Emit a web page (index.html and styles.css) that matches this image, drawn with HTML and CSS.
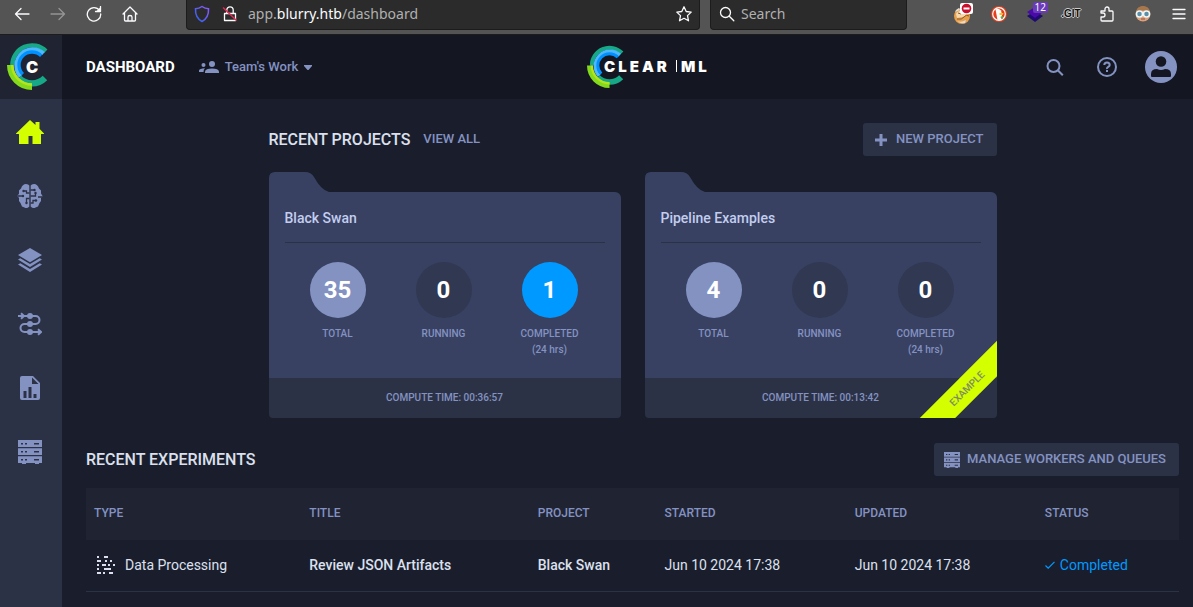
FILE: index.html
```html
<!DOCTYPE html>
<html lang="en">
<head>
<meta charset="utf-8">
<title>ClearML - Dashboard</title>
<link rel="stylesheet" href="styles.css">
</head>
<body>
<svg class="defs" aria-hidden="true">
  <symbol id="rings" viewBox="-75 -75 150 150">
    <g fill="none">
      <path stroke="#16a887" stroke-width="13" d="M41.7-41.7A59 59 0 0 0-59 0"/>
      <path stroke="#16a887" stroke-width="19" d="M-38.9 38.9A55 55 0 0 0 38.9 38.9"/>
      <path stroke="#4db8ff" stroke-width="12" d="M34.6-34.6A49 49 0 0 0-34.6 34.6"/>
      <path stroke="#0091ff" stroke-width="10" d="M27.6-27.6A39 39 0 0 0-27.6 27.6"/>
      <path stroke="#84da1c" stroke-width="19" d="M-65.5 0A65.5 65.5 0 0 0 0 65.5"/>
      <path stroke="#b4e51c" stroke-width="8" d="M-59 0A59 59 0 0 0 0 59"/>
    </g>
  </symbol>
  <symbol id="servers" viewBox="0 0 24 24">
    <path fill="currentColor" fill-rule="evenodd" d="M0 0h24v7H0zM3 3v1.6h2V3zm4 0v1.6h2V3zm9 0v1.6h5V3zM0 8.200h24v6.800H0zM3 11v1.600h2V11zm4 0v1.600h2V11zm9 0v1.600h5V11zM0 16.200h24V23h-3v1h-4v-1H8v1H4v-1H0zM3 19v1.600h2V19zm4 0v1.600h2V19zm9 0v1.600h5V19z"/>
  </symbol>
</svg>

<div class="browser">
  <div class="browser-nav">
    <button class="tool" aria-label="Back"><svg width="16" height="16" viewBox="0 0 16 16"><path class="line" d="M15 8H1.500M7 2.500 1.500 8 7 13.500"/></svg></button>
    <button class="tool dim" aria-label="Forward"><svg width="16" height="16" viewBox="0 0 16 16"><path class="line" d="M1 8h13.500M9 2.500 14.500 8 9 13.500"/></svg></button>
    <button class="tool" aria-label="Reload"><svg width="16" height="16" viewBox="0 0 16 16"><path class="line" d="M13.500 4.500A6.700 6.700 0 1 0 14.700 8M9.500 5.500h5v-5"/><path fill="currentColor" d="M14.800.8v5h-5z"/></svg></button>
    <button class="tool" aria-label="Home"><svg width="16" height="16" viewBox="0 0 16 16"><path class="line" d="M1 8 8 1l7 7M2.500 7v7q0 1 1 1h9q1 0 1-1V7M6 15v-4q0-1.500 2-1.500t2 1.500v4"/></svg></button>
  </div>
  <div class="urlbar">
    <svg width="16" height="18" viewBox="0 0 16 18"><defs><linearGradient id="shield" x1="1" y1="0" x2="0" y2="1"><stop offset="0" stop-color="#9059ff"/><stop offset="1" stop-color="#2a62e8"/></linearGradient></defs><path fill="none" stroke="url(#shield)" stroke-width="1.500" d="M8 1.500q3 2 6.500 2.200Q15 12.500 8 16.500 1 12.500 1.500 3.700 5 3.500 8 1.500z"/></svg>
    <svg width="16" height="18" viewBox="0 0 16 18"><path class="line" d="M2.500 8.500h11v7h-11zM4.800 8V5a3.200 3.200 0 0 1 6.400 0v3"/><path stroke="#e22850" stroke-width="1.500" d="m1 2.500 13.500 13"/></svg>
    <div class="url">app.<span class="url-host">blurry.htb</span>/dashboard</div>
    <button class="star" aria-label="Bookmark this page"><svg width="18" height="18" viewBox="0 0 18 18"><path class="line" d="m9 1.800 2.200 4.700 5 .6-3.700 3.500 1 5.200L9 13.300l-4.500 2.500 1-5.200L1.800 7.100l5-.6z"/></svg></button>
  </div>
  <label class="searchbar">
    <svg width="16" height="16" viewBox="0 0 16 16"><circle class="line" cx="6.500" cy="6.500" r="5"/><path class="line" d="m10.300 10.300 4.500 4.500"/></svg>
    <input class="search-input" type="text" placeholder="Search" aria-label="Search">
  </label>
  <div class="browser-nav">
    <button class="tool" aria-label="Cookie extension"><svg width="22" height="22" viewBox="-1 0 22 22"><circle cx="9" cy="13" r="8" fill="#e9a04b"/><path fill="#f6d9b0" d="M3 11q2-4 8-3l4 3-5 3-6 1z"/><path fill="none" stroke="#8a5a2c" d="M4 16q5 1 7-2t5-1M5 10l3 1"/><path fill="#ddd" d="M2 9q1-3 4-4l1 2zM4 18q4 2 9-1l-1 3q-4 1-8-2z"/><rect x="7" y="0" width="13" height="11" rx="2" fill="#fff"/><circle cx="13.500" cy="5.500" r="4.800" fill="#c8102e"/><path fill="#fff" d="M10.500 4.500h6v2h-6z"/></svg></button>
    <button class="tool" aria-label="DuckDuckGo"><svg width="18" height="18" viewBox="0 0 18 18"><circle cx="9" cy="9" r="8" fill="#e8401c"/><circle cx="9" cy="9" r="6.300" fill="#e8401c" stroke="#fff" stroke-width="1.200"/><path fill="#fff" d="M5.500 4.500q3-2 5.500 1l1 4-1 5.500q-2 .5-3.500 0z"/><path fill="#fdc11d" d="M9.500 8h4l-1 2h-3z"/><path fill="#3bb44a" d="m10 12 3-1v3z"/></svg></button>
    <button class="tool" aria-label="Layers extension, 12"><span class="ext-badge-wrap"><svg width="18" height="18" viewBox="0 0 18 18"><path fill="#1e0a70" d="m1 11 8-5 8 5-8 6z"/><path fill="#4a0aa8" d="m1 7 8-5 8 5-8 6z"/></svg><span class="ext-badge">12</span></span></button>
    <button class="tool git" aria-label="Git extension">.GIT</button>
    <button class="tool" aria-label="Extensions"><svg width="16" height="18" viewBox="0 0 16 18"><path class="line" d="M2 6h4V4a2 2 0 0 1 4 0v2h3q1 0 1 1v8q0 1-1 1H3q-1 0-1-1v-3h2a2 2 0 0 0 0-4H2z"/></svg></button>
    <button class="tool" aria-label="Profile extension"><svg width="18" height="18" viewBox="0 0 18 18"><circle cx="9" cy="9" r="7.500" fill="#d9a27c"/><path fill="#a8764b" d="M2 7q1-6 7-6t7 6q-7-3-14 0z"/><circle cx="5.500" cy="9" r="3" fill="#5b8fa8" stroke="#eef6f8" stroke-width="1.500"/><circle cx="12.500" cy="9" r="3" fill="#5b8fa8" stroke="#eef6f8" stroke-width="1.500"/><path stroke="#a04a3a" d="M7 14h4"/></svg></button>
    <button class="tool" aria-label="Menu"><svg width="14" height="12" viewBox="0 0 14 12"><path class="line" d="M1 1.500h12M1 6h12M1 10.500h12"/></svg></button>
  </div>
</div>

<div class="app">
  <aside class="sidebar">
    <a class="side-logo" href="#" aria-label="ClearML">
      <svg width="50" height="50" viewBox="-75 -75 150 150"><use href="#rings" x="-75" y="-75" width="150" height="150"/><text class="logo-text" x="0" y="23" font-size="49" text-anchor="middle">C</text></svg>
    </a>
    <nav class="side-nav">
      <a class="side-link active" href="#" aria-label="Dashboard"><svg width="28" height="24" viewBox="0 0 28 24"><path fill="currentColor" d="M14 0 19.500 5V2h4v6.800L28 13.500V14h-3v10h-8.500v-8h-4v8H3V14H0v-.5z"/></svg></a>
      <a class="side-link" href="#" aria-label="Projects"><svg width="26" height="26" viewBox="0 0 26 26"><path fill="currentColor" d="M12.300 2.500v21Q10 26 7.500 24.500L5 23.500 3.500 20 2 18v-3L.5 13 2 10.500V7.500l2-2Q5.500 1 9 1q2.500 0 3.300 1.500zM13.700 2.500v21q2.300 2.500 4.800 1l2.500-1 1.500-3.500 1.500-2v-3l1.500-2-1.500-2.500V7.500l-2-2Q20.500 1 17 1q-2.500 0-3.300 1.500z"/><g fill="none" stroke="#2c3246" stroke-width="1.300"><path d="M12.500 10H9.500V8H7M1 13h5M12.500 15.500H9.500V20M13.500 7H17M13.500 13h5v-3M25 14h-4M13.500 20H16v-2.500h3"/></g><g fill="#2c3246"><circle cx="6.500" cy="8" r="1.200"/><circle cx="6" cy="13" r="1.200"/><circle cx="9.500" cy="20" r="1.200"/><circle cx="17.500" cy="7" r="1.200"/><circle cx="18.500" cy="10" r="1.200"/><circle cx="19" cy="17.500" r="1.200"/></g></svg></a>
      <a class="side-link" href="#" aria-label="Datasets"><svg width="24" height="24" viewBox="0 0 24 24"><path fill="currentColor" d="m12 0 12 7-12 7.200L0 7zM0 11.500l2.300-1.300L12 16l9.700-5.800L24 11.500 12 19zM0 16.500l2.300-1.300L12 21l9.700-5.800L24 16.500 12 24z"/></svg></a>
      <a class="side-link" href="#" aria-label="Pipelines"><svg width="24" height="24" viewBox="0 0 24 24"><g fill="none" stroke="currentColor" stroke-width="2"><path d="M0 4h17.500a4 4 0 0 1 0 8H6.500a4 4 0 0 0 0 8H23M3 1.300 6 4 3 6.700M20 17.300l3 2.700-3 2.700"/></g><g fill="currentColor"><circle cx="12" cy="4" r="3"/><circle cx="12" cy="12" r="3"/><circle cx="12" cy="20" r="3"/></g></svg></a>
      <a class="side-link" href="#" aria-label="Reports"><svg width="20" height="24" viewBox="0 0 20 24"><path fill="currentColor" fill-rule="evenodd" d="M2 0h11l7 7v15q0 2-2 2H2q-2 0-2-2V2Q0 0 2 0zm10 1.500V8h6.500zM3.500 15v7h3v-7zm5-4v11h3V11zm5 7v4h3v-4z"/></svg></a>
      <a class="side-link" href="#" aria-label="Workers and queues"><svg width="24" height="24"><use href="#servers"/></svg></a>
    </nav>
  </aside>

  <div class="page">
    <header class="header">
      <div class="header-left">
        <h1 class="page-title">DASHBOARD</h1>
        <button class="team">
          <svg width="20" height="12" viewBox="0 0 20 12"><g fill="currentColor"><circle cx="13" cy="3" r="3"/><path d="M6 12v-1.500Q6.500 7.500 13 7.500t7 3V12z"/><circle cx="4.500" cy="4" r="2"/><path d="M0 11V9.500Q.5 7.500 6 7.300 4.500 8.500 4.500 11z"/></g></svg>
          <span>Team's Work</span>
          <svg width="8" height="5" viewBox="0 0 8 5"><path fill="currentColor" d="M0 0h8v1L4.500 5h-1L0 1z"/></svg>
        </button>
      </div>
      <a class="brand" href="#" aria-label="ClearML">
        <svg width="124" height="45" viewBox="0 0 124 45"><use href="#rings" width="45" height="45"/><text class="logo-text brand-word" x="17" y="29">CLEAR</text><path stroke="#fff" d="M89.500 17v12"/><text class="logo-text brand-word" x="94" y="29">ML</text></svg>
      </a>
      <div class="header-right">
        <button class="round" aria-label="Search"><svg width="18" height="18" viewBox="0 0 18 18"><g fill="none" stroke="currentColor" stroke-width="2"><circle cx="7.500" cy="8" r="6"/><path d="m11.800 12.300 5 5"/></g></svg></button>
        <button class="round" aria-label="Help"><svg width="20" height="20" viewBox="0 0 20 20"><circle cx="10" cy="10" r="9" fill="none" stroke="currentColor" stroke-width="2"/><path fill="none" stroke="currentColor" stroke-width="2" d="M7.300 8q0-2.500 2.700-2.500T12.700 8q0 1-1.500 1.900T10 12"/><path fill="currentColor" d="M9 13h2v2H9z"/></svg></button>
        <button class="round" aria-label="Account"><svg width="32" height="32" viewBox="0 0 32 32"><circle cx="16" cy="16" r="16" fill="#8492c2"/><g fill="#141722"><circle cx="16" cy="10.500" r="5.300"/><path d="M6 25v-2q0-5 6-5 4 2 8 0 6 0 6 5v2q0 1-1 1H7q-1 0-1-1z"/></g></svg></button>
      </div>
    </header>

    <main class="main">
      <section class="projects">
        <div class="section-head">
          <h2 class="section-title">RECENT PROJECTS</h2>
          <a class="view-all" href="#">VIEW ALL</a>
          <button class="action"><svg width="16" height="16" viewBox="0 0 16 16"><path stroke="currentColor" stroke-width="3" d="M8 2v12M2 8h12"/></svg>NEW PROJECT</button>
        </div>
        <div class="cards">
          <article class="card">
            <svg class="card-tab" width="62" height="20" viewBox="0 0 62 20"><path fill="currentColor" d="M0 20V6q0-6 6-6h30q6 0 9 5 7 13 15 15z"/></svg>
            <div class="card-body">
              <h3 class="card-title">Black Swan</h3>
              <div class="stats">
                <div class="stat"><span class="count total">35</span><span>TOTAL</span></div>
                <div class="stat"><span class="count">0</span><span>RUNNING</span></div>
                <div class="stat"><span class="count done">1</span><span>COMPLETED<br>(24 hrs)</span></div>
              </div>
            </div>
            <div class="card-foot">COMPUTE TIME: 00:36:57</div>
          </article>
          <article class="card">
            <svg class="card-tab" width="62" height="20" viewBox="0 0 62 20"><path fill="currentColor" d="M0 20V6q0-6 6-6h30q6 0 9 5 7 13 15 15z"/></svg>
            <div class="card-body">
              <h3 class="card-title">Pipeline Examples</h3>
              <div class="stats">
                <div class="stat"><span class="count total">4</span><span>TOTAL</span></div>
                <div class="stat"><span class="count">0</span><span>RUNNING</span></div>
                <div class="stat"><span class="count">0</span><span>COMPLETED<br>(24 hrs)</span></div>
              </div>
            </div>
            <div class="card-foot">COMPUTE TIME: 00:13:42</div>
            <div class="ribbon">EXAMPLE</div>
          </article>
        </div>
      </section>

      <section class="experiments">
        <div class="section-head">
          <h2 class="section-title">RECENT EXPERIMENTS</h2>
          <button class="action"><svg width="16" height="16"><use href="#servers"/></svg>MANAGE WORKERS AND QUEUES</button>
        </div>
        <table class="table">
          <colgroup><col class="col-type"><col class="col-title"><col class="col-project"><col class="col-date"><col class="col-date"><col></colgroup>
          <thead><tr><th>TYPE</th><th>TITLE</th><th>PROJECT</th><th>STARTED</th><th>UPDATED</th><th>STATUS</th></tr></thead>
          <tbody><tr>
            <td><span class="type"><svg width="18" height="18" viewBox="0 0 18 18"><path stroke="currentColor" stroke-width="2" d="M0 1h2M7 1h4M0 5h4M8 5h2M13 5h2M0 9h2M5 9h4M11 9h2M16 9h2M0 13h2M7 13h7M0 17h4M6 17h2M12 17h4"/></svg>Data Processing</span></td>
            <td class="strong">Review JSON Artifacts</td>
            <td class="strong">Black Swan</td>
            <td>Jun 10 2024 17:38</td>
            <td>Jun 10 2024 17:38</td>
            <td><span class="status"><svg width="10" height="8" viewBox="0 0 10 8"><path fill="none" stroke="currentColor" stroke-width="1.200" d="m.5 4.500 2.700 2.700L9.500.8"/></svg>Completed</span></td>
          </tr></tbody>
        </table>
      </section>
    </main>
  </div>
</div>
</body>
</html>
```
FILE: styles.css
```css
* { box-sizing: border-box; }

body {
  margin: 0;
  min-height: 100vh;
  display: flex;
  flex-direction: column;
  background: #1a1e2c;
  color: #dce0ee;
  font: 14px/20px Roboto, sans-serif;
}

h1, h2, h3 { margin: 0; font-weight: 500; }
a { color: inherit; text-decoration: none; }
svg { display: block; flex: none; }

button {
  border: 0;
  padding: 0;
  background: none;
  color: inherit;
  font: inherit;
  cursor: pointer;
}

.defs { position: absolute; width: 0; height: 0; }
.line { fill: none; stroke: currentColor; stroke-width: 1.3; stroke-linecap: round; stroke-linejoin: round; }

/* Browser toolbar */
.browser {
  display: flex;
  align-items: flex-start;
  height: 35px;
  padding-left: 8px;
  background: #545454;
  border-bottom: 1px solid #1c1c1c;
  color: #fbfbfe;
  font: 14px/20px "Noto Sans", sans-serif;
}
.browser-nav { display: flex; gap: 8px; }
.tool {
  width: 28px;
  height: 28px;
  display: flex;
  align-items: center;
  justify-content: center;
}
.dim { color: #949494; }
.urlbar, .searchbar {
  display: flex;
  align-items: center;
  height: 30px;
  padding-bottom: 1px;
  background: #2b2b2b;
  border: 1px solid #1c1c1c;
  border-top: 0;
  border-radius: 0 0 4px 4px;
}
.urlbar { flex: 1; gap: 12px; margin-left: 42px; padding-left: 7px; padding-right: 6px; }
.url { flex: 1; margin-left: -2px; color: #b0b0b0; }
.url-host { color: #fbfbfe; }
.searchbar { width: 197px; gap: 6px; margin: 0 42px 0 10px; padding-left: 8px; }
.search-input {
  flex: 1;
  min-width: 0;
  border: 0;
  padding: 0;
  background: none;
  color: inherit;
  font: inherit;
}
.search-input::placeholder { color: #b0b0b0; opacity: 1; }
.ext-badge-wrap { position: relative; }
.ext-badge {
  position: absolute;
  top: -3px;
  right: -4px;
  padding: 0 2px;
  background: #6a3ab8;
  border-radius: 2px;
  font-size: 10px;
  line-height: 11px;
}
.git {
  color: #111;
  font: 700 10px/12px "Liberation Sans", sans-serif;
  text-shadow: 1px 0 #ccc, -1px 0 #ccc, 0 1px #ccc, 0 -1px #ccc;
}

/* Shell */
.app { flex: 1; display: flex; }
.sidebar { flex: none; width: 62px; background: #2c3246; color: #8492c2; }
.side-logo {
  display: flex;
  height: 64px;
  padding: 5px 7px;
  background: #202432;
}
.side-nav { padding-top: 1px; }
.side-link {
  display: flex;
  align-items: center;
  justify-content: center;
  height: 64px;
  padding-right: 2px;
}
.active { color: #d3ff00; }
.logo-text { fill: #fff; font-family: Inter, sans-serif; font-weight: 900; }
.brand-word { font-size: 15px; letter-spacing: 3px; }

.page { flex: 1; min-width: 0; }
.header {
  display: grid;
  grid-template-columns: 1fr auto 1fr;
  align-items: center;
  height: 64px;
  padding: 0 16px 0 24px;
  background: #141722;
}
.header-left, .header-right { display: flex; align-items: center; }
.header-left { gap: 24px; }
.page-title { color: #fff; font-size: 15px; font-weight: 700; }
.team {
  display: flex;
  align-items: center;
  gap: 6px;
  color: #8492c2;
  font-size: 13px;
  font-weight: 500;
}
.brand { margin: 0 0 4px 34px; }
.header-right { justify-content: flex-end; gap: 28px; color: #8492c2; }
.round { display: flex; }
.round:first-child { margin-right: 5px; }

/* Content */
.main { padding: 24px 14px 16px 24px; }
.projects { max-width: 728px; margin: 0 auto; }
.section-head { display: flex; align-items: center; height: 33px; }
.section-title { font-size: 16px; }
.view-all { margin-left: 13px; padding-bottom: 1px; color: #8492c2; font-size: 13px; font-weight: 500; }
.action {
  display: flex;
  align-items: center;
  gap: 7px;
  height: 33px;
  margin-left: auto;
  padding: 0 13px 1px 10px;
  background: #2c3246;
  border-radius: 3px;
  color: #8492c2;
  font-size: 13px;
  font-weight: 500;
}
.action svg { margin-top: 2px; }

.cards { display: grid; grid-template-columns: 1fr 1fr; gap: 24px; margin-top: 16px; }
.card { position: relative; overflow: hidden; border-radius: 4px; }
.card-tab { color: #384161; }
.card-body { height: 186px; padding: 0 16px; background: #384161; border-radius: 0 6px 0 0; }
.card-title {
  padding: 16px 0 14px;
  border-bottom: 1px solid #2c3246;
  color: #c3cdf0;
  font-size: 14px;
}
.stats { display: grid; grid-template-columns: repeat(3, 1fr); padding: 19px 2px 0 0; }
.stat {
  display: flex;
  flex-direction: column;
  align-items: center;
  gap: 8px;
  color: #8492c2;
  font-size: 10px;
  font-weight: 500;
  line-height: 16px;
  text-align: center;
}
.count {
  width: 56px;
  height: 56px;
  border-radius: 50%;
  background: #303852;
  color: #fff;
  font-size: 24px;
  font-weight: 700;
  line-height: 56px;
}
.total { background: #8492c2; }
.done { background: #0099ff; }
.card-foot {
  padding: 10px 0;
  background: #2c3246;
  color: #8492c2;
  font-size: 10px;
  font-weight: 500;
  text-align: center;
}
.ribbon {
  position: absolute;
  right: -35px;
  bottom: 17px;
  width: 130px;
  background: #d3ff00;
  color: #7f8d60;
  font-size: 10px;
  font-weight: 500;
  line-height: 25px;
  text-align: center;
  transform: rotate(-45deg);
}

.experiments { margin-top: 25px; }
.table {
  width: 100%;
  margin-top: 12px;
  border-collapse: collapse;
  table-layout: fixed;
  text-align: left;
}
.col-type { width: 19.7%; }
.col-title { width: 20.9%; }
.col-project { width: 11.6%; }
.col-date { width: 17.4%; }
.table th, .table td { padding: 15px 8px 16px; }
.table th {
  height: 52px;
  padding: 14px 8px 17px;
  background: #202432;
  color: #8492c2;
  font-size: 12px;
  font-weight: 500;
}
.table td { border-bottom: 1px solid #2c3246; }
.table .strong { font-weight: 500; }
.type { display: flex; align-items: center; gap: 10px; padding-left: 3px; }
.status { display: flex; align-items: center; gap: 5px; color: #0099ff; }
```
